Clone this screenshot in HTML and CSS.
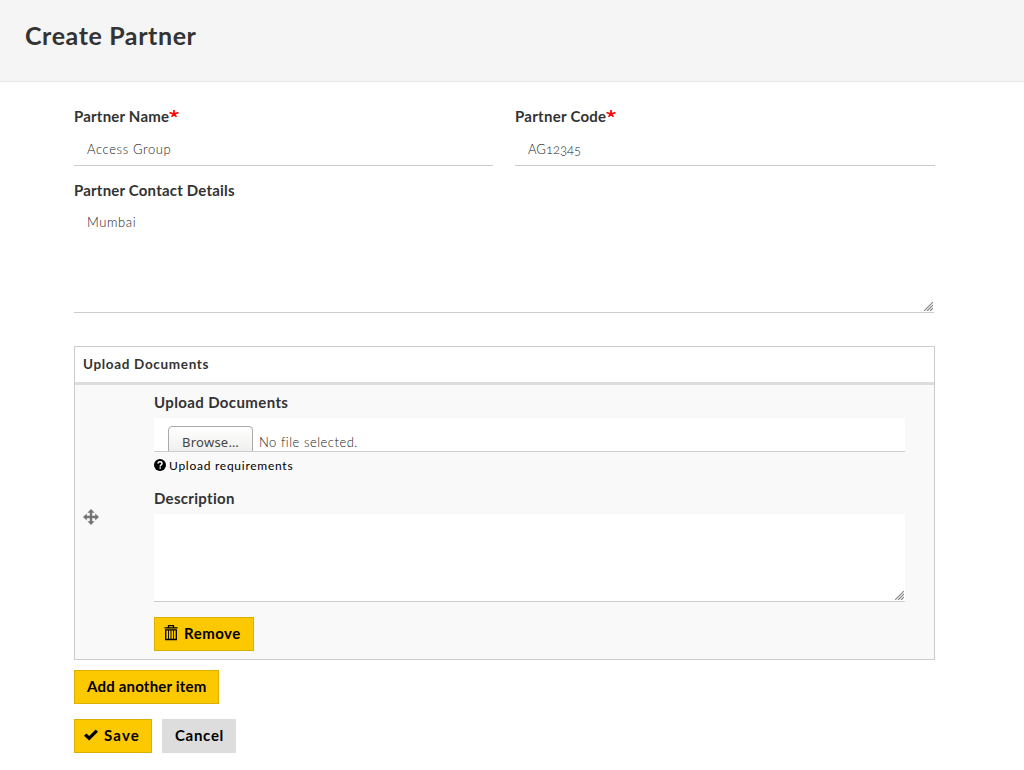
FILE: index.html
```html
<!DOCTYPE html>
<html lang="en">
<head>
<meta charset="utf-8">
<title>Create Partner</title>
<link rel="stylesheet" href="styles.css">
</head>
<body>
<header class="page-header"><h1>Create Partner</h1></header>
<main class="form">
  <div class="row">
    <div class="field">
      <div class="label name-label"><span>Partner Name</span><svg class="required" viewBox="0 0 10 8"><path d="M5 0v4M.5 2.5 5 4l4.5-1.5M2.5 6.8 5 4l2.5 2.8"/></svg></div>
      <div class="input"><span class="name-value">Access Group</span></div>
    </div>
    <div class="field">
      <div class="label code-label"><span>Partner Code</span><svg class="required" viewBox="0 0 10 8"><path d="M5 0v4M.5 2.5 5 4l4.5-1.5M2.5 6.8 5 4l2.5 2.8"/></svg></div>
      <div class="input"><span class="code-value">AG12345</span></div>
    </div>
  </div>
  <div class="label contact-label"><span>Partner Contact Details</span></div>
  <div class="textarea contact"><span class="contact-value">Mumbai</span>
    <svg class="grip" viewBox="0 0 9 9"><path d="M0 9 9 0M3 9l6-6M6 9l3-3"/></svg>
  </div>
  <section class="table">
    <div class="table-head"><span>Upload Documents</span></div>
    <div class="table-row">
      <div class="drag"><svg viewBox="0 0 16 16"><path d="M8 0l3.6 3.8H9.2v3H12.2V4.4L16 8l-3.8 3.6V9.2H9.2v3h2.4L8 16l-3.6-3.8h2.4v-3H3.8v2.4L0 8l3.8-3.6v2.4h3v-3H4.4z"/></svg></div>
      <div class="document">
        <div class="label upload-label"><span>Upload Documents</span></div>
        <div class="file"><div class="browse"><span>Browse…</span></div><span class="file-name">No file selected.</span></div>
        <div class="help"><svg viewBox="0 0 12 12"><circle cx="6" cy="6" r="6"/><path d="M4 4.6C4 3.1 4.9 2.8 6 2.8s2 .6 2 1.7C8 6 6.2 5.8 6.2 7.4M6.2 8.3v1.5"/></svg><span>Upload requirements</span></div>
        <div class="label description-label"><span>Description</span></div>
        <div class="textarea description"><svg class="grip" viewBox="0 0 9 9"><path d="M0 9 9 0M3 9l6-6M6 9l3-3"/></svg></div>
        <div class="button remove"><svg viewBox="0 0 14 16"><path d="M4.5 2.5v-2h5v2M.5 2.8h13M1.7 4.8h10.6v9.7H1.7z"/><path class="slats" d="M4.5 5v9M7 5v9M9.5 5v9"/></svg><span>Remove</span></div>
      </div>
    </div>
  </section>
  <div class="button add"><span>Add another item</span></div>
  <div class="actions">
    <div class="button save"><svg viewBox="0 0 14 12"><path d="M0 6.8 2.4 4.4 5.2 7.1 11.7.5 14 2.8 5.2 11.6z"/></svg><span>Save</span></div>
    <div class="button cancel"><span>Cancel</span></div>
  </div>
</main>
</body>
</html>
```
FILE: styles.css
```css
* { box-sizing: border-box; }
body { margin: 0; background: #fff; color: #333; font-family: Lato, "Open Sans", sans-serif; font-size: 14px; font-variant-ligatures: none; }
span { white-space: nowrap; }
svg { display: block; flex: none; }
.page-header { height: 82px; padding: 19px 25px; background: #f5f5f5; border-bottom: 1px solid #e7e7e7; }
h1 { margin: 0; font-size: 25px; line-height: 33px; font-weight: 700; letter-spacing: .6px; }
.form { width: 861px; margin: 24px 0 0 74px; }
.row { display: grid; grid-template-columns: 419px 420px; column-gap: 22px; }
.label { display: flex; height: 20px; line-height: 20px; font-weight: 700; font-size: 15px; letter-spacing: .2px; }
.required { width: 10px; height: 8px; margin-top: 4px; fill: none; stroke: #f00; stroke-width: 1.7; }
.code-label { letter-spacing: .27px; }
.upload-label { letter-spacing: .38px; }
.input { height: 32px; margin-top: 8px; padding: 0 13px; line-height: 31px; border-bottom: 1px solid #ccc; color: #222; font-size: 13px; font-weight: 300; }
.name-value { letter-spacing: .62px; }
.code-value { font-variant-numeric: oldstyle-nums; }
.contact-label { margin-top: 14px; }
.textarea { position: relative; background: #fff; border-bottom: 1px solid #ccc; }
.contact { width: 860px; height: 106px; margin-top: 7px; padding: 5px 13px; line-height: 20px; color: #222; font-size: 13px; font-weight: 300; letter-spacing: .6px; }
.grip { position: absolute; right: 1px; bottom: 1px; width: 9px; height: 9px; fill: none; stroke: #888; stroke-width: 1.2; }
.table { width: 861px; height: 314px; margin-top: 33px; border: 1px solid #ccc; background: #f9f9f9; }
.table-head { height: 38px; padding: 0 8px; background: #fff; border-bottom: 3px solid #ddd; font-size: 13.5px; line-height: 35px; font-weight: 700; letter-spacing: .67px; }
.table-row { display: flex; height: 274px; }
.drag { display: flex; width: 79px; padding-left: 8px; align-items: center; padding-bottom: 10px; }
.drag svg { width: 16px; height: 16px; fill: #757575; }
.document { width: 751px; padding-top: 7px; }
.file { display: flex; height: 34px; margin-top: 6px; padding: 8px 14px 0; overflow: hidden; background: #fff; border-bottom: 1px solid #ccc; }
.browse { width: 85px; height: 34px; flex: none; border: 1px solid #aaa; border-radius: 4px; background: linear-gradient(#fff, #eaeae7); color: #444; text-align: center; font: 13px/30px "Noto Sans", sans-serif; letter-spacing: .25px; }
.file-name { margin-left: 6px; line-height: 32px; font-size: 13px; font-weight: 300; letter-spacing: .5px; color: #222; }
.help { display: flex; height: 20px; margin-top: 4px; align-items: center; font-size: 12px; line-height: 20px; letter-spacing: .74px; color: #000; }
.help svg { width: 12px; height: 12px; margin: -2px 3px 0 0; }
.help path { fill: none; stroke: #fff; stroke-width: 1.5; }
.description-label { margin-top: 12px; letter-spacing: .3px; }
.description { height: 88px; margin-top: 6px; }
.button { display: flex; height: 34px; padding: 0 12px; border: 1px solid #dcb000; background: #fcc800; color: #000; line-height: 31px; font-size: 15px; font-weight: 700; letter-spacing: .2px; }
.remove { width: 100px; margin-top: 15px; padding-left: 9px; letter-spacing: .5px; }
.remove svg { width: 14px; height: 16px; margin: 7px 6px 0 0; fill: none; stroke: #000; stroke-width: 1.3; }
.remove .slats { stroke-width: .9; }
.add { width: 145px; margin-top: 10px; }
.actions { display: flex; gap: 10px; margin-top: 15px; }
.save { width: 78px; padding-left: 9px; letter-spacing: 1.2px; }
.save svg { width: 14px; height: 12px; margin: 9px 6px 0 0; }
.cancel { width: 74px; border-color: #ddd; background: #ddd; letter-spacing: .7px; }
```
